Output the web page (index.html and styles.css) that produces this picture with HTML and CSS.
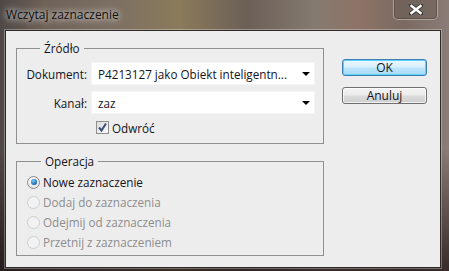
FILE: index.html
```html
<!DOCTYPE html>
<html lang="pl">
<head>
    <meta charset="UTF-8">
    <meta name="viewport" content="width=device-width, initial-scale=1.0">
    <title>Wczytaj zaznaczenie</title>
    <link rel="stylesheet" href="styles.css">
</head>
<body>
    <div class="window">
        <div class="titlebar">
            <span class="title">Wczytaj zaznaczenie</span>
            <div class="close">
                <svg width="14" height="11" viewBox="0 0 14 11">
                    <path d="M2 1.5 L12 9.5 M12 1.5 L2 9.5" stroke="#3a3a3a" stroke-width="4.2" stroke-linecap="square"/>
                    <path d="M2.5 2 L11.5 9 M11.5 2 L2.5 9" stroke="#fff" stroke-width="2.4" stroke-linecap="square"/>
                </svg>
            </div>
        </div>

        <div class="client">
            <div class="groups">
                <fieldset class="group">
                    <legend>Źródło</legend>
                    <div class="form">
                        <label>Dokument:</label>
                        <div class="select"><span>P4213127 jako Obiekt inteligentn...</span><span class="arrow"></span></div>
                        <label>Kanał:</label>
                        <div class="select"><span>zaz</span><span class="arrow"></span></div>
                        <span></span>
                        <div class="check">
                            <span class="box">
                                <svg width="11" height="11" viewBox="0 0 11 11">
                                    <path d="M2 5.5 L4.5 8.5 L9 1.5" fill="none" stroke="#3b4f7a" stroke-width="2"/>
                                </svg>
                            </span>
                            Odwróć
                        </div>
                    </div>
                </fieldset>

                <fieldset class="group operation">
                    <legend>Operacja</legend>
                    <div class="radio checked"><span class="dot"></span>Nowe zaznaczenie</div>
                    <div class="radio disabled"><span class="dot"></span>Dodaj do zaznaczenia</div>
                    <div class="radio disabled"><span class="dot"></span>Odejmij od zaznaczenia</div>
                    <div class="radio disabled"><span class="dot"></span>Przetnij z zaznaczeniem</div>
                </fieldset>
            </div>

            <div class="buttons">
                <button class="btn default">OK</button>
                <button class="btn">Anuluj</button>
            </div>
        </div>
    </div>
</body>
</html>
```

FILE: styles.css
```css
body {
    margin: 0;
    font-family: "Open Sans", "Noto Sans", sans-serif;
    font-size: 11.7px;
    color: #141420;
}
.window {
    width: 449px;
    height: 271px;
    box-sizing: border-box;
    padding: 0 8px 3px 5px;
    display: flex;
    flex-direction: column;
    background:
        linear-gradient(180deg, rgba(0,0,0,0) 0%, rgba(0,0,0,0) 55%, rgba(20,10,10,0.7) 100%),
        linear-gradient(90deg, #4e4846 0%, #6f6258 10%, #7c6f63 25%, #8b7b5b 40%, #6b5f57 55%, #857a70 70%, #8e7366 80%, #7a6a62 90%, #8a7c76 100%);
}
.titlebar {
    height: 30px;
    display: flex;
    justify-content: space-between;
    align-items: flex-start;
}
.title {
    margin-top: 6px;
    margin-left: 1px;
    font-size: 12px;
    color: #111;
    text-shadow: 0 0 6px rgba(255,255,255,0.9), 0 0 10px rgba(255,255,255,0.6);
}
.close {
    width: 43px;
    height: 20px;
    margin-right: 3px;
    margin-top: -1px;
    border: 1px solid rgba(230,225,220,0.5);
    border-top: none;
    border-radius: 0 0 5px 5px;
    background: rgba(100,88,80,0.4);
    box-shadow: inset 0 0 0 1px rgba(60,50,45,0.4);
    display: flex;
    align-items: center;
    justify-content: center;
}
.client {
    flex: 1;
    display: flex;
    align-items: flex-start;
    padding: 10px 13px 0 10px;
    background-color: #ededed;
    border: 1px solid #2f2a27;
    box-shadow: 0 0 0 1px rgba(255,255,255,0.3);
}
.groups {
    width: 308px;
}
.group {
    margin: 0;
    padding: 7px 9px 9px 9px;
    border: 1px solid #8f9090;
    min-width: 0;
}
.group legend {
    margin-left: 14px;
    padding: 0 4px;
    line-height: 15px;
}
.form {
    display: grid;
    grid-template-columns: 61px 222px;
    column-gap: 5px;
    row-gap: 8px;
    align-items: center;
}
.form label {
    text-align: right;
}
.select {
    height: 21px;
    background-color: #fff;
    box-shadow: 0 0 0 1px #f4f4f4;
    display: flex;
    align-items: center;
    justify-content: space-between;
    padding: 0 4px 0 6px;
    box-sizing: border-box;
}
.arrow {
    width: 0;
    height: 0;
    border-left: 4px solid transparent;
    border-right: 4px solid transparent;
    border-top: 4px solid #000;
}
.check {
    display: flex;
    align-items: center;
    gap: 3px;
    margin-left: 4px;
    height: 13px;
}
.box {
    width: 11px;
    height: 11px;
    border: 1px solid #8f8f8f;
    background: linear-gradient(135deg, #dcdcdc, #fafafa);
    display: flex;
}
.operation {
    margin-top: 10px;
    padding: 3px 9px 3px 10px;
}
.radio {
    height: 20px;
    display: flex;
    align-items: center;
    gap: 3px;
}
.dot {
    width: 11px;
    height: 11px;
    border-radius: 50%;
    border: 1px solid #bdbdbd;
    background: radial-gradient(circle at 40% 35%, #fbfbfb, #dedede);
    position: relative;
}
.checked .dot {
    border-color: #8c8c8c;
}
.checked .dot::after {
    content: "";
    position: absolute;
    left: 2.5px;
    top: 2.5px;
    width: 6px;
    height: 6px;
    border-radius: 50%;
    background: radial-gradient(circle at 40% 35%, #7ad0f8, #1662a8 70%, #0a3c78);
}
.disabled {
    color: #8d8d8d;
}
.disabled .dot {
    border-color: #cfcfcf;
    background: #f2f2f2;
}
.buttons {
    margin-top: 18px;
    margin-left: 18px;
    width: 85px;
    display: flex;
    flex-direction: column;
    gap: 11px;
}
.btn {
    height: 17px;
    padding: 0;
    font: inherit;
    font-size: 12px;
    color: #141420;
    line-height: 14px;
    border: 1px solid #707070;
    border-radius: 3px;
    background: linear-gradient(180deg, #f4f4f4 0%, #ebebeb 48%, #dcdcdc 52%, #cfcfcf 100%);
    box-shadow: inset 0 0 0 1px rgba(255,255,255,0.7);
}
.btn.default {
    border-color: #3c7fb1;
    background: linear-gradient(180deg, #eaf6fd 0%, #d9f0fc 48%, #bee6fd 52%, #a7d9f5 100%);
    box-shadow: inset 0 0 0 1px #5ed0ff;
}
```
